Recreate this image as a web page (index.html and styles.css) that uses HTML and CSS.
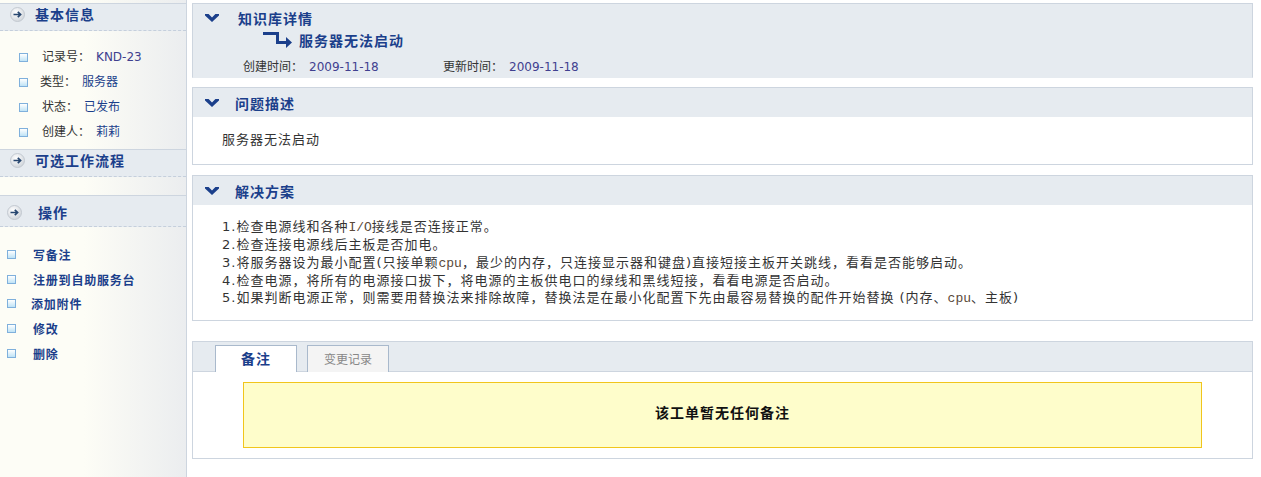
FILE: index.html
```html
<!DOCTYPE html>
<html lang="zh-CN">
<head>
  <meta charset="UTF-8">
  <title>知识库详情</title>
  <link rel="stylesheet" href="styles.css">
</head>
<body>

  <div class="sidebar">
    <div class="side-head">
      <svg class="go-icon" width="15" height="15" viewBox="0 0 15 15"><defs><radialGradient id="g1" cx="40%" cy="35%" r="70%"><stop offset="0" stop-color="#ffffff"/><stop offset="1" stop-color="#cfd4da"/></radialGradient></defs><circle cx="7.5" cy="7.5" r="7" fill="url(#g1)" stroke="#c3c9d1"/><path d="M3.5 7.5H10.5M7.8 4.8L10.6 7.5L7.8 10.2" fill="none" stroke="#27466f" stroke-width="1.7"/></svg>
      <span>基本信息</span>
    </div>
    <ul class="info-list">
      <li><span class="sq"></span><span class="lbl ind">记录号：</span><span class="val latin">KND-23</span></li>
      <li><span class="sq"></span><span class="lbl">类型：</span><span class="val">服务器</span></li>
      <li><span class="sq"></span><span class="lbl ind">状态：</span><span class="val">已发布</span></li>
      <li><span class="sq"></span><span class="lbl ind">创建人：</span><span class="val">莉莉</span></li>
    </ul>

    <div class="side-head">
      <svg class="go-icon" width="15" height="15" viewBox="0 0 15 15"><circle cx="7.5" cy="7.5" r="7" fill="url(#g1)" stroke="#c3c9d1"/><path d="M3.5 7.5H10.5M7.8 4.8L10.6 7.5L7.8 10.2" fill="none" stroke="#27466f" stroke-width="1.7"/></svg>
      <span>可选工作流程</span>
    </div>
    <div class="side-empty"></div>

    <div class="side-head tall">
      <svg class="go-icon" width="15" height="15" viewBox="0 0 15 15"><circle cx="7.5" cy="7.5" r="7" fill="url(#g1)" stroke="#c3c9d1"/><path d="M3.5 7.5H10.5M7.8 4.8L10.6 7.5L7.8 10.2" fill="none" stroke="#27466f" stroke-width="1.7"/></svg>
      <span class="wide">操作</span>
    </div>
    <ul class="op-list">
      <li><span class="sq"></span><a href="#">写备注</a></li>
      <li><span class="sq"></span><a href="#">注册到自助服务台</a></li>
      <li><span class="sq"></span><a href="#" class="tight">添加附件</a></li>
      <li><span class="sq"></span><a href="#">修改</a></li>
      <li><span class="sq"></span><a href="#">删除</a></li>
    </ul>
  </div>

  <div class="main">

    <div class="panel panel-top">
      <div class="top-title">
        <svg class="chev" width="14" height="8" viewBox="0 0 14 8"><polygon points="0,0 3.6,0 7,3.4 10.4,0 14,0 14,1.6 7,8 0,1.6" fill="#1b3f8b"/></svg>
        <span class="title">知识库详情</span>
      </div>
      <div class="sub-title">
        <svg width="29" height="16" viewBox="0 0 29 16"><path d="M0 0H16V9H23V5L29 10.5L23 16V12H13V3H0Z" fill="#1b3f8b"/></svg>
        <span>服务器无法启动</span>
      </div>
      <div class="dates">
        <span class="date-item">创建时间：<span class="date">2009-11-18</span></span>
        <span class="date-item">更新时间：<span class="date">2009-11-18</span></span>
      </div>
    </div>

    <div class="panel">
      <div class="panel-head">
        <svg class="chev" width="14" height="8" viewBox="0 0 14 8"><polygon points="0,0 3.6,0 7,3.4 10.4,0 14,0 14,1.6 7,8 0,1.6" fill="#1b3f8b"/></svg>
        <span class="title">问题描述</span>
      </div>
      <div class="panel-body desc">服务器无法启动</div>
    </div>

    <div class="panel">
      <div class="panel-head">
        <svg class="chev" width="14" height="8" viewBox="0 0 14 8"><polygon points="0,0 3.6,0 7,3.4 10.4,0 14,0 14,1.6 7,8 0,1.6" fill="#1b3f8b"/></svg>
        <span class="title">解决方案</span>
      </div>
      <div class="panel-body steps">
        1.检查电源线和各种<span class="mono">I/O</span>接线是否连接正常。<br>
        2.检查连接电源线后主板是否加电。<br>
        3.将服务器设为最小配置(只接单颗<span class="mono">cpu</span>，最少的内存，只连接显示器和键盘)直接短接主板开关跳线，看看是否能够启动。<br>
        4.检查电源，将所有的电源接口拔下，将电源的主板供电口的绿线和黑线短接，看看电源是否启动。<br>
        5.如果判断电源正常，则需要用替换法来排除故障，替换法是在最小化配置下先由最容易替换的配件开始替换 (内存、<span class="mono">cpu</span>、主板)
      </div>
    </div>

    <div class="panel panel-tabs">
      <div class="tab-strip">
        <span class="tab active">备注</span>
        <span class="tab">变更记录</span>
      </div>
      <div class="tab-body">
        <div class="notice">该工单暂无任何备注</div>
      </div>
    </div>

  </div>

</body>
</html>
```

FILE: styles.css
```css
body {
  margin: 0;
  font-family: "DejaVu Sans", "Noto Sans CJK SC", sans-serif;
  font-size: 12px;
  color: #333;
  background-color: white;
  display: flex;
  min-height: 477px;
}

/* left column */
.sidebar {
  width: 186px;
  border-right: 1px solid #cdd5df;
  padding-top: 3px;
  background: linear-gradient(to right, #fdfdf6 45%, #ebedef);
}

.side-head {
  height: 28px;
  box-sizing: border-box;
  padding: 0 0 0 10px;
  line-height: 21px;
  background-color: #e6ebf0;
  border-top: 1px solid #cdd5df;
  border-bottom: 1px dashed #c5cfdc;
  display: flex;
  align-items: flex-start;
  color: #1b3f8b;
  font-size: 14px;
  font-weight: bold;
  letter-spacing: 1px;
  font-family: "Noto Sans CJK SC", sans-serif;
}

.side-head.tall {
  height: 32px;
  padding: 6px 0 0 7px;
}

.go-icon {
  margin: 3px 10px 0 0;
  flex: none;
}

.side-head .wide {
  margin-left: 6px;
}

.side-empty {
  height: 18px;
}

.info-list,
.op-list {
  list-style: none;
  margin: 0;
  padding: 14px 0 4px 19px;
}

.info-list li,
.op-list li {
  height: 25px;
  line-height: 25px;
  display: flex;
  align-items: center;
}

.sq {
  width: 7px;
  height: 7px;
  border: 1px solid #7fb0dc;
  background: linear-gradient(#ffffff, #bfe3f6);
  margin-right: 12px;
  flex: none;
}

.lbl {
  color: #333;
  margin-right: 6px;
}

.lbl.ind {
  margin-left: 2px;
}

.val {
  color: #1b3f8b;
}

.val.latin {
  color: #40408f;
}

.op-list {
  padding: 15px 0 0 7px;
}

.op-list li {
  height: 24.75px;
}

.op-list .sq {
  margin-right: 17px;
}

.op-list a {
  color: #1b3f8b;
  font-weight: bold;
  letter-spacing: 0.8px;
  text-decoration: none;
  font-family: "Noto Sans CJK SC", sans-serif;
}

.op-list a.tight {
  margin-left: -2px;
}

/* right column */
.main {
  flex: 1;
  padding: 3px 8px 0 5px;
}

.panel {
  border: 1px solid #cdd5df;
  margin-bottom: 10px;
  background-color: white;
}

.title {
  color: #1b3f8b;
  font-size: 14px;
  font-weight: bold;
  letter-spacing: 1px;
  font-family: "Noto Sans CJK SC", sans-serif;
}

.chev {
  flex: none;
  margin: 0 16px 0 12px;
}

.panel-top {
  background-color: #e6ebf0;
  border-bottom-color: #e6ebf0;
  height: 73px;
  margin-bottom: 9px;
}

.top-title {
  display: flex;
  align-items: center;
  height: 22px;
  margin-top: 3px;
}

.top-title .title {
  margin-left: 3px;
}

.sub-title {
  display: flex;
  align-items: center;
  margin: 1px 0 0 70px;
  height: 20px;
  color: #1b3f8b;
  font-size: 14px;
  font-weight: bold;
  letter-spacing: 1px;
  font-family: "Noto Sans CJK SC", sans-serif;
}

.sub-title svg {
  margin-right: 7px;
}

.dates {
  display: flex;
  margin: 9px 0 0 50px;
  line-height: 16px;
}

.date-item {
  width: 200px;
}

.date {
  color: #40408f;
  margin-left: 6px;
}

.panel-head {
  height: 29px;
  background-color: #e6ebf0;
  display: flex;
  align-items: center;
}

.panel-body {
  padding-left: 29px;
  font-size: 13px;
  letter-spacing: 1px;
}

.desc {
  line-height: 18px;
  padding-top: 14px;
  height: 33px;
}

.steps {
  line-height: 17.3px;
  padding-top: 13px;
  padding-bottom: 13px;
}

.mono {
  font-family: "Liberation Mono", monospace;
  letter-spacing: 0;
  color: #5a4a3a;
}

.panel-tabs {
  margin-top: 20px;
}

.tab-strip {
  height: 30px;
  box-sizing: border-box;
  background-color: #e6ebf0;
  border-bottom: 1px solid #cdd5df;
  padding: 3px 0 0 22px;
  display: flex;
  gap: 10px;
}

.tab {
  width: 80px;
  height: 26px;
  border: 1px solid #a9b9cc;
  border-bottom: none;
  background-color: #f4f4f4;
  color: #888;
  text-align: center;
  line-height: 25px;
  font-family: "Noto Sans CJK SC", sans-serif;
}

.tab.active {
  background-color: white;
  color: #1b3f8b;
  font-size: 14px;
  font-weight: bold;
  letter-spacing: 1px;
}

.tab-body {
  padding: 10px 50px;
}

.notice {
  height: 64px;
  background-color: #fefdcb;
  border: 1px solid #f1c51c;
  text-align: center;
  line-height: 58px;
  color: #111;
  font-size: 14px;
  font-weight: bold;
  letter-spacing: 1px;
  font-family: "Noto Sans CJK SC", sans-serif;
}
```
